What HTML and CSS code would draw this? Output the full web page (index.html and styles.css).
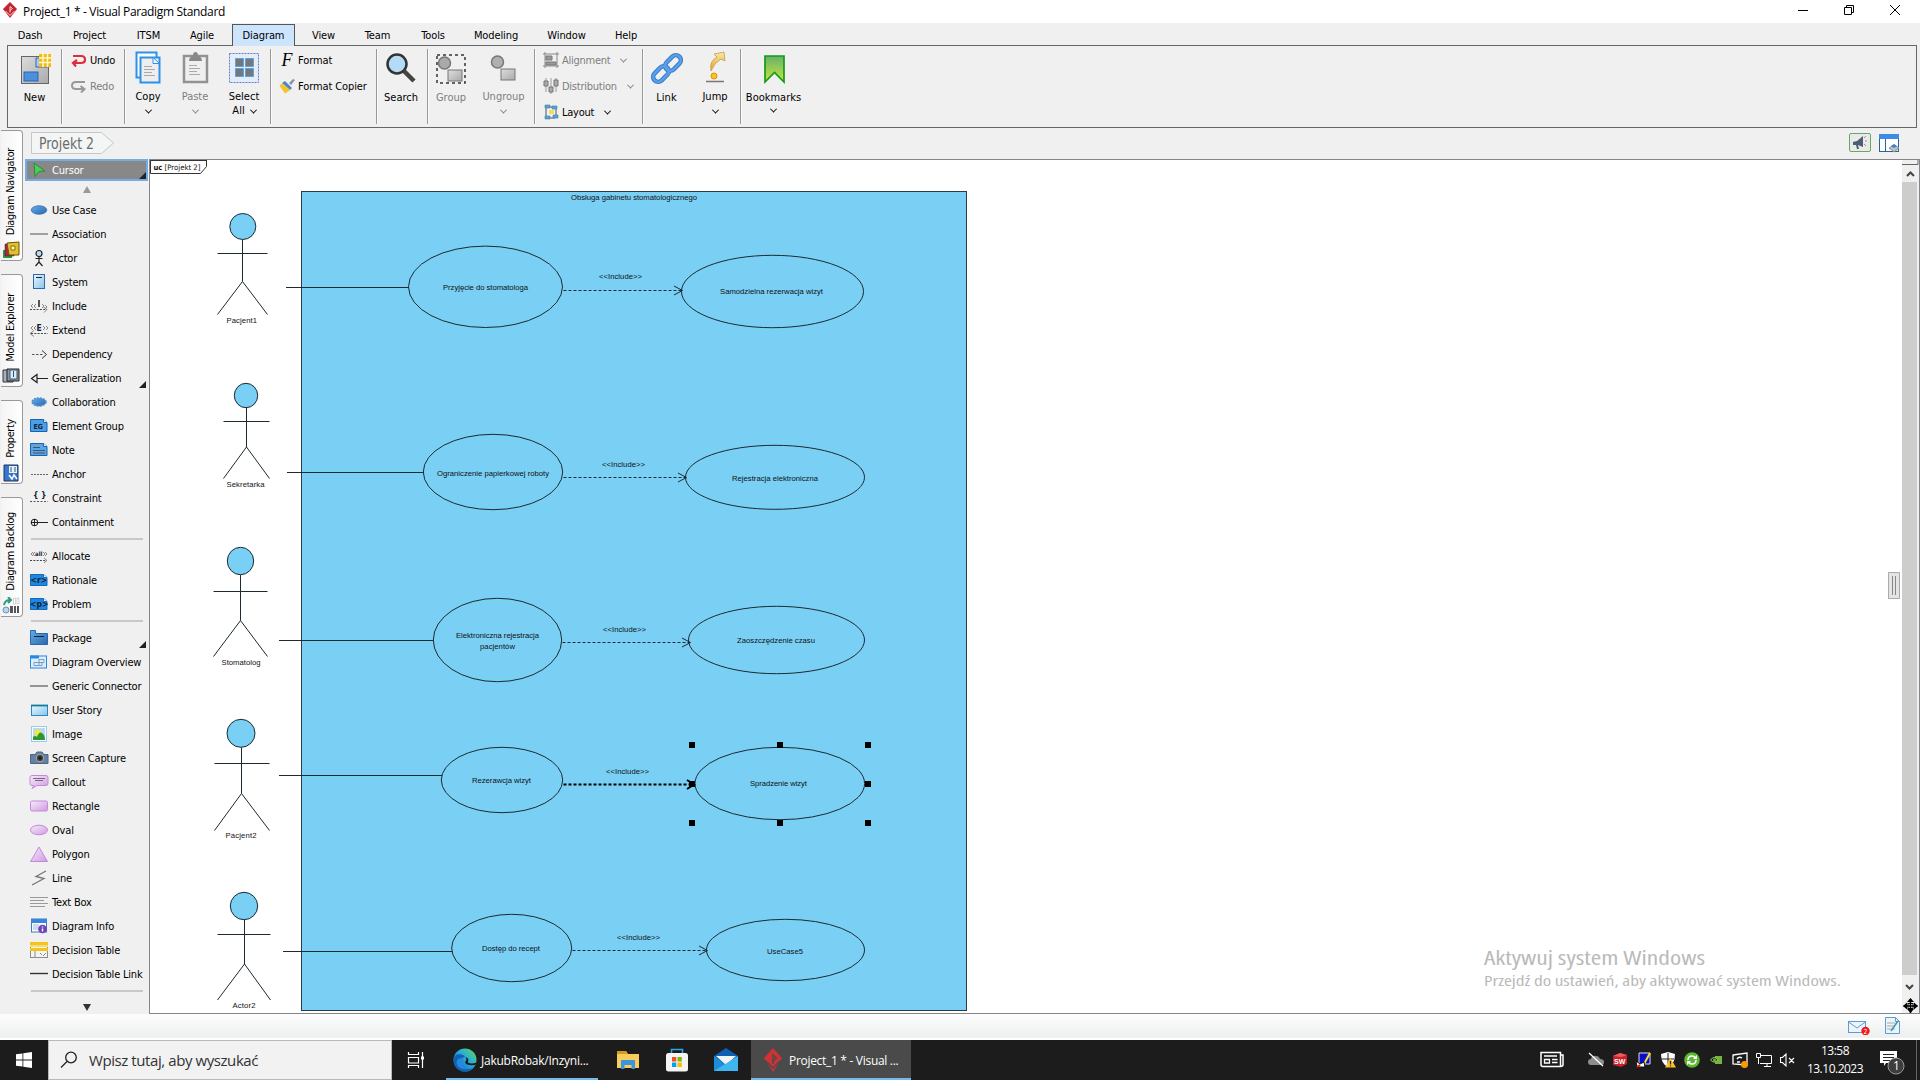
FILE: index.html
```html
<!DOCTYPE html>
<html lang="pl">
<head>
<meta charset="utf-8">
<title>Project_1 * - Visual Paradigm Standard</title>
<link rel="stylesheet" href="styles.css">
</head>
<body>
<svg width="0" height="0" class="defs">
  <defs>
    <linearGradient id="blue" x1="0" y1="0" x2="1" y2="1"><stop offset="0" stop-color="#67ade9"/><stop offset="1" stop-color="#2767ad"/></linearGradient>
    <linearGradient id="sky" x1="0" y1="0" x2="1" y2="1"><stop offset="0" stop-color="#e8f7ff"/><stop offset="1" stop-color="#88c4ec"/></linearGradient>
    <linearGradient id="violet" x1="0" y1="0" x2="1" y2="1"><stop offset="0" stop-color="#f6ecfb"/><stop offset="1" stop-color="#cf9ae0"/></linearGradient>
    <linearGradient id="grey" x1="0" y1="0" x2="1" y2="1"><stop offset="0" stop-color="#ddd"/><stop offset="1" stop-color="#aaa"/></linearGradient>
    <linearGradient id="green" x1="0" y1="0" x2="0" y2="1"><stop offset="0" stop-color="#68b06c"/><stop offset="1" stop-color="#c6e83c"/></linearGradient>
    <linearGradient id="gold" x1="0" y1="0" x2="0" y2="1"><stop offset="0" stop-color="#f8e9a8"/><stop offset="1" stop-color="#f0a016"/></linearGradient>
    <linearGradient id="edge" x1="0" y1="1" x2="1" y2="0"><stop offset="0" stop-color="#0d63b8"/><stop offset=".55" stop-color="#27a8de"/><stop offset="1" stop-color="#5ee05a"/></linearGradient>
  </defs>
</svg>

<header class="titlebar">
  <svg class="logo" width="14" height="16" viewBox="0 0 14 16"><path d="M7 0l7 7-7 9-7-9z" fill="#c4242b"/><path d="M2.500 9L7 13.500 11.500 9M7 10.500V4.500l2.500 2L7 8.500" stroke="#f6dada" fill="none"/></svg>
  <span class="title">Project_1 * - Visual Paradigm Standard</span>
  <div class="win-buttons">
    <svg width="12" height="12" viewBox="0 0 12 12"><path d="M1 6.500h10" stroke="#000"/></svg>
    <svg width="12" height="12" viewBox="0 0 12 12"><path d="M1.500 3.500h7v7h-7zM3.500 3.500v-2h7v7h-2" stroke="#000" fill="none"/></svg>
    <svg width="12" height="12" viewBox="0 0 12 12"><path d="M1 1l10 10M11 1L1 11" stroke="#000" fill="none"/></svg>
  </div>
</header>

<nav class="menu">
  <span>Dash</span><span>Project</span><span>ITSM</span><span>Agile</span><span class="active">Diagram</span><span>View</span><span>Team</span><span>Tools</span><span>Modeling</span><span>Window</span><span>Help</span>
</nav>

<section class="ribbon">
  <div class="group g-new">
    <div class="big low"><svg width="32" height="34" viewBox="0 0 32 34"><rect x="2.500" y="5.500" width="27" height="27" fill="url(#grey)" stroke="#666"/><rect x="5" y="21" width="14" height="9" fill="#4a90dc" stroke="#2567b5"/><path d="M17 7v9h12V7z" fill="#a9cbed" stroke="#2567b5"/><path d="M20 3h12v13H20z" fill="#f5b912"/><path d="M20 7h12M20 11.500h12M24 3v13M28.500 3v13" stroke="#fff8c8" stroke-width="1.500"/></svg><b>New</b></div>
  </div>
  <div class="group g-undo stack">
    <div class="small"><svg width="18" height="16" viewBox="0 0 18 16"><path d="M3 4h8q4 0 4 3.500T11 11H4M7 8l-4 3 3 3.500" fill="none" stroke="#e12a3c" stroke-width="2.200"/></svg>Undo</div>
    <div class="small off"><svg width="18" height="16" viewBox="0 0 18 16"><path d="M15 4H6Q2 4 2 7.500T6 11h8M10.500 8l4 3-3.500 3.500" fill="none" stroke="#999" stroke-width="2"/></svg>Redo</div>
  </div>
  <div class="group g-clip">
    <div class="big"><svg width="28" height="34" viewBox="0 0 28 34"><rect x="2.500" y="1.500" width="20" height="25" fill="#fff" stroke="#2c91e8" stroke-width="2"/><path d="M6.500 6.500h19v25h-19z" fill="#eee" stroke="#2c91e8" stroke-width="2"/><path d="M19 6.500l6.500 6h-6.500z" fill="#fff" stroke="#2c91e8"/><path d="M10 15.500h8M10 18.500h11M10 21.500h8M10 24.500h11" stroke="#aaa"/></svg><b>Copy</b><i class="chev"></i></div>
    <div class="big off"><svg width="28" height="34" viewBox="0 0 28 34"><rect x="3" y="5" width="23" height="26" fill="#efefef" stroke="#929292" stroke-width="2.500"/><path d="M8 10q0-4 4-5 0-4 2.500-4T17 5q4 1 4 5z" fill="#888"/><path d="M8 14.500h8M8 17.500h11M8 20.500h8M8 23.500h11" stroke="#aaa"/></svg><b>Paste</b><i class="chev"></i></div>
    <div class="big"><svg width="32" height="34" viewBox="0 0 32 34"><rect x="1.500" y="2.500" width="29" height="29" fill="#e4edf7" stroke="#5f7ed1" stroke-dasharray="2 1"/><path d="M7.500 7.500h8v8h-8zM17.500 7.500h8v8h-8zM7.500 17.500h8v8h-8zM17.500 17.500h8v8h-8z" fill="#777" stroke="#55a5e5"/></svg><b>Select</b><b class="line2">All <i class="chev"></i></b></div>
  </div>
  <div class="group g-format stack">
    <div class="small"><em class="fmt">F</em>Format</div>
    <div class="small"><svg width="16" height="16" viewBox="0 0 16 16"><path d="M10 5l4-4 2 1-4 5z" fill="#8395a8"/><path d="M6 3l7 7-2 2-8-7z" fill="#4a86c8"/><path d="M3 5l8 7-1 1-4 2.500L.500 8z" fill="#f5c431"/></svg>Format Copier</div>
  </div>
  <div class="group g-search"><div class="big low"><svg width="32" height="34" viewBox="0 0 32 34"><circle cx="12" cy="13" r="9.500" fill="#b4dcf8" stroke="#333" stroke-width="2.500"/><path d="M19 20l10 10" stroke="#444" stroke-width="4.500"/></svg><b>Search</b></div></div>
  <div class="group g-group">
    <div class="big low off"><svg width="32" height="34" viewBox="0 0 32 34"><rect x="2" y="4" width="28" height="28" fill="none" stroke="#333" stroke-width="1.500" stroke-dasharray="3 3"/><circle cx="9.500" cy="12" r="6" fill="#aaa" stroke="#777" stroke-width="1.500"/><rect x="13" y="19" width="14" height="11" fill="url(#grey)" stroke="#777"/></svg><b>Group</b></div>
    <div class="big off"><svg width="32" height="34" viewBox="0 0 32 34"><circle cx="9.500" cy="11" r="6" fill="#b0b0b0" stroke="#777" stroke-width="1.500"/><rect x="13" y="18" width="14" height="11" fill="url(#grey)" stroke="#777"/></svg><b>Ungroup</b><i class="chev"></i></div>
  </div>
  <div class="group g-align stack">
    <div class="small off"><svg width="16" height="16" viewBox="0 0 16 16"><path d="M2 0v16M14 0v16M0 2h16M0 14h16" stroke="#888"/><path d="M3 4h6v4H3zM3 10h10v3H3z" fill="#999" stroke="#777"/></svg>Alignment<i class="chev"></i></div>
    <div class="small off"><svg width="16" height="16" viewBox="0 0 16 16"><path d="M3 0v14M8 0v16M13 0v14" stroke="#999"/><path d="M1 3h4v5H1zM6 9h4v5H6zM11 2h4v6h-4z" fill="#aaa" stroke="#777"/></svg>Distribution<i class="chev"></i></div>
    <div class="small"><svg width="16" height="16" viewBox="0 0 16 16"><path d="M3 4v9M13 5v7M5 3h6M5 14h7" stroke="#456"/><path d="M2 1h5v3H2zM9 2h5v3H9zM2 12h5v3H2zM10 11h5v3h-5z" fill="#5ba6c8" stroke="#3f7f9d" stroke-width=".6"/><path d="M6 6h5v4H6z" fill="#f0dc6a"/></svg>Layout<i class="chev"></i></div>
  </div>
  <div class="group g-link">
    <div class="big low"><svg width="32" height="34" viewBox="0 0 32 34"><g fill="none" stroke="#2f7fd2" stroke-width="4.500"><rect x="13" y="7" width="18" height="10" rx="5" transform="rotate(-45 22 12)"/><rect x="1" y="18" width="18" height="10" rx="5" transform="rotate(-45 10 23)"/></g><g fill="none" stroke="#5f9fe2" stroke-width="2.500"><rect x="13" y="7" width="18" height="10" rx="5" transform="rotate(-45 22 12)"/><rect x="1" y="18" width="18" height="10" rx="5" transform="rotate(-45 10 23)"/></g></svg><b>Link</b></div>
    <div class="big"><svg width="24" height="34" viewBox="0 0 24 34"><path d="M8 20Q6 10 14 6L11 3l10-2 1 9-4-2q-6 3-10 12z" fill="url(#gold)" stroke="#b9934a" stroke-width=".7"/><circle cx="11" cy="25" r="3" fill="#f8c70e" stroke="#dd8d18"/><path d="M3 30.500h18" stroke="#777" stroke-width="1.500"/></svg><b>Jump</b><i class="chev"></i></div>
  </div>
  <div class="group g-book"><div class="big low"><svg width="24" height="34" viewBox="0 0 24 34"><path d="M3 5h19v26l-9.500-9.500L3 31z" fill="url(#green)" stroke="#129b18" stroke-width="1.700"/></svg><b>Bookmarks</b><i class="chev up"></i></div></div>
</section>

<div class="work">
  <aside class="side">
    <div class="tab t1"><span>Diagram Navigator</span><svg width="18" height="18" viewBox="0 0 18 18"><path d="M1 9h9v8H1z" fill="#2d9a3f"/><path d="M3 3h9v12H3z" fill="#b52348" stroke="#222" stroke-width=".5"/><path d="M5 2l12-1v13H7z" fill="#e3c02c" stroke="#655409"/><path d="M9 5h4v4H9z" fill="#fff4a8" stroke="#876f0b"/></svg></div>
    <div class="tab t2"><span>Model Explorer</span><svg width="18" height="18" viewBox="0 0 18 18"><path d="M1 3h10v12H1z" fill="#9fb2c7" stroke="#333"/><path d="M5 2h12v12H5z" fill="#8b96a0" stroke="#222"/><path d="M8 3h7v9H8z" fill="#d8edff" stroke="#456"/><path d="M11.500 4v6" stroke="#257"/></svg></div>
    <div class="tab t3"><span>Property</span><svg width="16" height="18" viewBox="0 0 16 18"><path d="M1 1h14v16H1z" fill="#3579cf" stroke="#235"/><path d="M6 2h8v7H6z" fill="#e3f1ff"/><path d="M6 11l3 4 2-4 3 4" stroke="#fff" stroke-width="1.500" fill="none"/><path d="M8 3v5M12 3v5" stroke="#456"/></svg></div>
    <div class="tab t4"><span>Diagram Backlog</span><svg width="18" height="18" viewBox="0 0 18 18"><path d="M2 8q1-5 6-5M6 0l3 3-3 3" fill="none" stroke="#299c7b" stroke-width="2"/><circle cx="4" cy="13" r="3" fill="#b8d5ef" stroke="#6793bb"/><path d="M8 9h3v7H8zM12 9h2v7h-2zM15 9h2v7h-2z" fill="#555"/><path d="M11.500 1h2v6h-2zM15 1h2v6h-2z" fill="#fff" stroke="#bbb" stroke-width=".6"/></svg></div>
  </aside>

  <div class="editor">
    <div class="crumbs">
      <svg class="crumb" width="84" height="23" viewBox="0 0 84 23"><path d="M.5.500h70l12 10.500-12 10.500H.5z" fill="#f4f6f6" stroke="#c5c8c8"/><text x="8" y="17" textLength="55" lengthAdjust="spacingAndGlyphs">Projekt 2</text></svg>
      <div class="crumb-tools">
        <svg width="22" height="20" viewBox="0 0 22 20"><rect x=".5" y=".5" width="21" height="18" rx="1.500" fill="#e9ebe9" stroke="#6aa569"/><path d="M4 9l4-1 6-5v11l-5-2 1 4H8l-1-4H4z" fill="#4c5d74"/><path d="M15 5l2-2M16 8h2M15 11l2 2" stroke="#999"/></svg>
        <svg width="21" height="20" viewBox="0 0 21 20"><rect x=".5" y="1.500" width="19" height="17" fill="#fff" stroke="#2a6496"/><path d="M0 1h20v5H0z" fill="#3c8be4"/><path d="M6.500 6v12" stroke="#2a6496"/><path d="M10 15l5-3 5 3-5 4z" fill="#b9c0c8" stroke="#8a8f96"/><path d="M12 13l3-2 3 2-3 2z" fill="#3c7fcc"/></svg>
      </div>
    </div>
    <div class="panes">
      <div class="palette">
        <div class="row cursor"><svg viewBox="0 0 20 18"><path d="M5 2l11 8-6 .5-4 5z" fill="#4ccc58" stroke="#2b8a35"/></svg>Cursor<i class="corner"></i></div>
        <div class="scroll-up"></div>
        <div class="row"><svg viewBox="0 0 20 18"><ellipse cx="10" cy="9" rx="7.800" ry="4.300" fill="url(#blue)" stroke="#2c6aa8" stroke-width=".7"/></svg>Use Case</div>
        <div class="row"><svg viewBox="0 0 20 18"><path d="M1 9h18" stroke="#858585" stroke-width="1.500"/></svg>Association</div>
        <div class="row"><svg viewBox="0 0 20 18"><circle cx="10" cy="4.500" r="3" fill="#b9dff6" stroke="#222" stroke-width="1.200"/><path d="M10 7.500V13M6.500 9.500h7M10 13l-3.500 4M10 13l3.500 4" stroke="#222" stroke-width="1.200" fill="none"/></svg>Actor</div>
        <div class="row"><svg viewBox="0 0 20 18"><rect x="4.500" y="1.500" width="11" height="14" fill="url(#sky)" stroke="#2c6aa8"/><path d="M7 4.500h6" stroke="#222"/></svg>System</div>
        <div class="row"><svg viewBox="0 0 20 18"><path d="M1 12.500h17" stroke="#444" stroke-dasharray="2 1.300"/><path d="M4 7L2 9l2 2M7 7L5 9l2 2M13 7l2 2-2 2M16 8l2 2-2 2M14 9.500l4 3-3 3" fill="none" stroke="#888"/><path d="M10 3v7" stroke="#222" stroke-width="1.500"/></svg>Include</div>
        <div class="row"><svg viewBox="0 0 20 18"><path d="M2 12.500h17" stroke="#444" stroke-dasharray="2 1.300"/><path d="M4 5L2 7l2 2M7 5L5 7l2 2M14 5l2 2-2 2M17 5l2 2-2 2M5 9.500l-4 3 4 3" fill="none" stroke="#888"/><text x="7.500" y="9.500" class="g8">E</text></svg>Extend</div>
        <div class="row"><svg viewBox="0 0 20 18"><path d="M3 9.500h12" stroke="#555" stroke-dasharray="2.500 1.500"/><path d="M13 5.500l4.500 4-4.500 4" fill="none" stroke="#333"/></svg>Dependency</div>
        <div class="row"><svg viewBox="0 0 20 18"><path d="M8 9.500h11M8 5.500v8L2.500 9.500z" fill="none" stroke="#222" stroke-width="1.200"/></svg>Generalization<i class="corner"></i></div>
        <div class="row"><svg viewBox="0 0 20 18"><ellipse cx="10" cy="9" rx="7" ry="4" fill="url(#blue)" stroke="#4a90d0" stroke-width="1.500" stroke-dasharray="2 1"/></svg>Collaboration</div>
        <div class="row"><svg viewBox="0 0 20 18"><path d="M1.500 2.500h13l3.500 3v9H1.500z" fill="#4a9fe8" stroke="#1763ac"/><path d="M14.500 2.500v3H18" fill="#fff" stroke="#1763ac"/><text x="4.500" y="11.500" class="g7">EG</text></svg>Element Group</div>
        <div class="row"><svg viewBox="0 0 20 18"><path d="M1.500 2.500h13l3.500 3v9H1.500z" fill="#5ba5e6" stroke="#1763ac"/><path d="M14.500 2.500v3H18" fill="#fff" stroke="#1763ac"/><path d="M4 6.500h7M4 9.500h12M4 12h12" stroke="#456"/></svg>Note</div>
        <div class="row"><svg viewBox="0 0 20 18"><path d="M2 9.500h17" stroke="#666" stroke-dasharray="2 1"/></svg>Anchor</div>
        <div class="row"><svg viewBox="0 0 20 18"><path d="M1 12.500h18" stroke="#555" stroke-dasharray="2 1.500"/><text x="4" y="9" class="g8">{ }</text></svg>Constraint</div>
        <div class="row"><svg viewBox="0 0 20 18"><circle cx="5.500" cy="9.500" r="3.300" fill="none" stroke="#222"/><path d="M2 9.500h17M5.500 6v7" stroke="#222"/></svg>Containment</div>
        <div class="sep"></div>
        <div class="row"><svg viewBox="0 0 20 18"><path d="M1 13.500h17" stroke="#444" stroke-dasharray="2 1.300"/><path d="M4 5L2 7l2 2M6 5L4 7l2 2M14 5l2 2-2 2M16 5l2 2-2 2M15 11l3 2.500-3 2.500" fill="none" stroke="#888"/><text x="6" y="9" class="g6">all</text></svg>Allocate</div>
        <div class="row"><svg viewBox="0 0 20 18"><path d="M1.500 3.500h13l3.500 3v8H1.500z" fill="#1d87e2" stroke="#1469b8"/><path d="M14.500 3.500v3H18" fill="#fff" stroke="#1469b8"/><text x="1.500" y="12" class="g8">&lt;r&gt;</text></svg>Rationale</div>
        <div class="row"><svg viewBox="0 0 20 18"><path d="M1.500 3.500h13l3.500 3v8H1.500z" fill="#1d87e2" stroke="#1469b8"/><path d="M14.500 3.500v3H18" fill="#fff" stroke="#1469b8"/><text x="1" y="12" class="g8">&lt;p&gt;</text></svg>Problem</div>
        <div class="sep"></div>
        <div class="row"><svg viewBox="0 0 20 18"><path d="M1.500 4.500v-3h5v3h12v11h-17z" fill="url(#blue)" stroke="#2767ad"/><path d="M5 7.500h10" stroke="#123"/></svg>Package<i class="corner"></i></div>
        <div class="row"><svg viewBox="0 0 20 18"><rect x="1.500" y="3" width="16" height="12" fill="#dceefc" stroke="#2688e2"/><path d="M1 2.500h9v3H1z" fill="#2688e2"/><path d="M10 6.500h5v3h-5zM5 9.500h5v3H5zM10 12.500h3v-3" fill="none" stroke="#7a9cc0"/></svg>Diagram Overview</div>
        <div class="row"><svg viewBox="0 0 20 18"><path d="M1 9h18" stroke="#858585" stroke-width="1.700"/></svg>Generic Connector</div>
        <div class="row"><svg viewBox="0 0 20 18"><rect x="2.500" y="4.500" width="16" height="10" fill="url(#sky)" stroke="#268ac2"/><path d="M2 4.500h17" stroke="#117d93" stroke-width="1.800"/></svg>User Story</div>
        <div class="row"><svg viewBox="0 0 20 18"><rect x="2.500" y="1.500" width="15" height="15" fill="#fff" stroke="#9dc8e8"/><path d="M4 3h12v12H4z" fill="#bdd8f2"/><circle cx="9" cy="8" r="3" fill="#f7ee18"/><path d="M4 15v-3q2-2 4 0 2-6 5-4t3 7z" fill="#2f9634"/></svg>Image</div>
        <div class="row"><svg viewBox="0 0 20 18"><path d="M1.500 5.500H6L8 3h5l2 2.500h4v9H1.500z" fill="#6481a5" stroke="#4c6686"/><circle cx="11" cy="9" r="3.800" fill="#444" stroke="#aaa"/><circle cx="11" cy="9" r="1.500" fill="#181818"/></svg>Screen Capture</div>
        <div class="row"><svg viewBox="0 0 20 18"><path d="M3 2.500h14q2 0 2 2v6q0 2-2 2H8l-5 3 2-3H3q-2 0-2-2v-6q0-2 2-2z" fill="url(#violet)" stroke="#c788db"/><path d="M4 5.500h12M6 7.500h8" stroke="#776a80"/></svg>Callout</div>
        <div class="row"><svg viewBox="0 0 20 18"><rect x="1.500" y="4" width="17" height="10" rx="1.500" fill="url(#violet)" stroke="#c788db"/></svg>Rectangle</div>
        <div class="row"><svg viewBox="0 0 20 18"><ellipse cx="10" cy="9" rx="8.500" ry="4.800" fill="url(#violet)" stroke="#c788db"/></svg>Oval</div>
        <div class="row"><svg viewBox="0 0 20 18"><path d="M10 2l8.500 14.500h-17z" fill="url(#violet)" stroke="#c788db"/></svg>Polygon</div>
        <div class="row"><svg viewBox="0 0 20 18"><path d="M17 2L7 7.500l8 2L3 16" stroke="#777" stroke-width="1.300" fill="none"/></svg>Line</div>
        <div class="row"><svg viewBox="0 0 20 18"><path d="M1 4.500h18M1 7.500h14M1 10.500h18M1 13.500h15" stroke="#999"/></svg>Text Box</div>
        <div class="row"><svg viewBox="0 0 20 18"><rect x="2.500" y="2" width="15" height="13" fill="#f8fbff" stroke="#4379b5"/><path d="M2 2h16v4H2z" fill="#3585e2"/><path d="M4 8h6M4 10h6M4 12h6" stroke="#9dbbe0"/><circle cx="13.500" cy="12" r="4.300" fill="#7040b8"/><path d="M13.500 9.500v1M13.500 11.500v3" stroke="#fff" stroke-width="1.500"/></svg>Diagram Info</div>
        <div class="row"><svg viewBox="0 0 20 18"><rect x="1.500" y="1.500" width="17" height="15" fill="#f2f4f4" stroke="#8a8f8f"/><path d="M1 1h18v3H1zM1 7h18v3H1z" fill="#f5c416"/><path d="M1 5h18" stroke="#f5dc7a" stroke-width="2"/><path d="M6 10v6M11 12l2 2M14 15l3-3" stroke="#888"/></svg>Decision Table</div>
        <div class="row"><svg viewBox="0 0 20 18"><path d="M1 8.500h18" stroke="#333" stroke-width="1.400"/></svg>Decision Table Link</div>
        <div class="sep"></div>
        <div class="scroll-down"></div>
      </div>

      <div class="canvas">
        <svg class="diagram" viewBox="150 160 1752 853" width="1752" height="853">
          <g class="frame"><path d="M150.500 160v13.500h50l6-7V160" fill="#fff"/><path d="M150 160.500h57"/></g>
          <text class="frame-t" x="153.500" y="170" font-weight="bold">uc</text><text class="frame-t" x="164.500" y="170" textLength="36" lengthAdjust="spacingAndGlyphs">[Projekt 2]</text>
          <rect class="system" x="301.500" y="191.500" width="665" height="819"/>
          <g class="shape">
            <ellipse class="head" cx="242.800" cy="226.500" rx="13" ry="13"/><path d="M242.500 240v41.500M217.500 253.500h50M217.500 314.500l25-33 25 33"/>
            <ellipse class="head" cx="246" cy="395.500" rx="11.700" ry="12.200"/><path d="M246.500 408v39M223.500 421.500h46M223.500 478.500l23-31.500 23 31.500"/>
            <ellipse class="head" cx="240.500" cy="561" rx="13.200" ry="13.700"/><path d="M240.500 575v45.500M213.500 591.500h54M213.500 656.500l27-36 27 36"/>
            <ellipse class="head" cx="241" cy="733.300" rx="14" ry="14"/><path d="M241.500 747.500v46M214.500 763.500h55M214.500 830.500l27-37 28 37"/>
            <ellipse class="head" cx="244" cy="906" rx="13.700" ry="13.700"/><path d="M244.500 920v44M217.500 934.500h53M217.500 1000l27-36 26 36"/>
            <path d="M286 287.500h123M287 472.500h137M279 640.500h154M279 775.500h163M283 951.500h169"/>
            <ellipse cx="485.500" cy="286.800" rx="77" ry="40.700"/><ellipse cx="772.500" cy="291.500" rx="91" ry="36.200"/>
            <ellipse cx="493" cy="472" rx="69.700" ry="37.700"/><ellipse cx="775" cy="477.300" rx="89.500" ry="32"/>
            <ellipse cx="497.500" cy="640" rx="64.200" ry="41.700"/><ellipse cx="776.500" cy="640" rx="88" ry="33.700"/>
            <ellipse cx="502" cy="780" rx="60.700" ry="32.700"/><ellipse cx="779.800" cy="783.500" rx="84.800" ry="36.200"/>
            <ellipse cx="511.700" cy="948" rx="60" ry="33.700"/><ellipse cx="785.500" cy="950" rx="79" ry="30.700"/>
            <path class="dash" d="M563.500 290.500H682M563.500 477.500H686M562.500 642.500H690M572.500 950.500H707"/>
            <path d="M674 286l8.500 4.500-8.500 4.500M678 473l8.500 4.500-8.500 4.500M682 638l8.500 4.500-8.500 4.500M699 946l8.500 4.500-8.500 4.500"/>
            <path class="thick" d="M563.500 784.500H690"/><path class="thick-a" d="M687 780l7 4.500-7 4.500"/>
          </g>
          <path d="M689 742h6v6h-6zM777 742h6v6h-6zM865 742h6v6h-6zM689 781h6v6h-6zM865 781h6v6h-6zM689 820h6v6h-6zM777 820h6v6h-6zM865 820h6v6h-6z"/>
          <g class="labels" transform="translate(0 -1)">
            <text x="571" y="200.500" textLength="126">Obsługa gabinetu stomatologicznego</text>
            <text x="226.500" y="323.500" textLength="30.500">Pacjent1</text>
            <text x="226.500" y="487.500" textLength="38">Sekretarka</text>
            <text x="221.500" y="665.500" textLength="39">Stomatolog</text>
            <text x="225.500" y="838.500" textLength="31">Pacjent2</text>
            <text x="232.500" y="1008.500" textLength="23">Actor2</text>
            <text x="443" y="290.500" textLength="85">Przyjęcie do stomatologa</text>
            <text x="720" y="294.500" textLength="103">Samodzielna rezerwacja wizyt</text>
            <text x="437" y="476.500" textLength="112">Ograniczenie papierkowej roboty</text>
            <text x="732" y="481.500" textLength="86">Rejestracja elektroniczna</text>
            <text x="456" y="638.500" textLength="83">Elektroniczna rejestracja</text>
            <text x="480" y="649.500" textLength="35">pacjentów</text>
            <text x="737" y="643.500" textLength="78">Zaoszczędzenie czasu</text>
            <text x="472" y="783.500" textLength="59">Rezerawcja wizyt</text>
            <text x="750" y="786.500" textLength="57">Spradzenie wizyt</text>
            <text x="482" y="951.500" textLength="58">Dostęp do recept</text>
            <text x="767" y="954.500" textLength="36">UseCase5</text>
            <text x="599" y="279.500" textLength="43">&lt;&lt;Include&gt;&gt;</text>
            <text x="602" y="467.500" textLength="43">&lt;&lt;Include&gt;&gt;</text>
            <text x="603" y="632.500" textLength="43">&lt;&lt;Include&gt;&gt;</text>
            <text x="606" y="774.500" textLength="43">&lt;&lt;Include&gt;&gt;</text>
            <text x="617" y="940.500" textLength="43">&lt;&lt;Include&gt;&gt;</text>
          </g>
          <g class="watermark"><text x="1484" y="965" class="wm1" textLength="221" lengthAdjust="spacingAndGlyphs">Aktywuj system Windows</text><text x="1484" y="986" class="wm2" textLength="357" lengthAdjust="spacingAndGlyphs">Przejdź do ustawień, aby aktywować system Windows.</text></g>
          <path d="M1888.500 572.500h11v26h-11z" fill="#e4e4e4" stroke="#aaa"/><path d="M1892.500 576v19M1895.500 576v19" stroke="#888"/>
        </svg>
        <div class="scrollbar">
          <svg width="18" height="22" viewBox="0 0 18 22"><path d="M0 4.500h16V0" stroke="#666" fill="none"/><path d="M5 16l3.500-3.500L12 16" stroke="#444" stroke-width="2" fill="none"/></svg>
          <div class="thumb"></div>
          <svg width="18" height="38" viewBox="0 0 18 38"><path d="M4 10l3.500 3.500L11 10" stroke="#444" stroke-width="2" fill="none"/><path d="M8.500 24v14M1.500 31h14" stroke="#000" stroke-width="1.500"/><path d="M8.500 23l3.500 4H5zM8.500 38l3.500-4H5zM1 31l4-3.500v7zM16 31l-4-3.500v7z"/><rect x="6" y="28.500" width="5" height="5" fill="none" stroke="#000"/></svg>
        </div>
      </div>
    </div>
  </div>
</div>

<div class="status">
  <svg width="24" height="18" viewBox="0 0 24 18"><rect x="1.500" y="4.500" width="17" height="11" fill="#eef5fa" stroke="#5a9bd8"/><path d="M1.500 5l8.500 6 8.500-6" fill="none" stroke="#5a9bd8"/><circle cx="18.500" cy="14" r="4.200" fill="#f01818"/><text x="16.500" y="16.500" class="n2">2</text></svg>
  <svg width="16" height="18" viewBox="0 0 16 18"><path d="M.5.500h10l4 4v12H.5z" fill="#eef3f7" stroke="#5a9bd8"/><path d="M10.500.500v4h4" fill="none" stroke="#5a9bd8"/><path d="M2 6h8M2 9h8M2 12h8" stroke="#aaa"/><path d="M13 4L6 14" stroke="#3a99b5" stroke-width="1.500"/></svg>
</div>

<footer class="taskbar">
  <div class="start"><svg width="16" height="16" viewBox="0 0 16 16"><path d="M0 2.300L6.500 1.400V7.500H0zM7.300 1.300L16 0v7.500H7.300zM0 8.400h6.500v6.200L0 13.700zM7.300 8.400H16V16l-8.700-1.300z" fill="#fff"/></svg></div>
  <div class="search"><svg width="18" height="18" viewBox="0 0 18 18"><circle cx="11" cy="6.500" r="5.300" fill="none" stroke="#222" stroke-width="1.300"/><path d="M7 10.500L1 16.500" stroke="#222" stroke-width="1.300"/></svg><span>Wpisz tutaj, aby wyszukać</span></div>
  <div class="task tv"><svg width="18" height="16" viewBox="0 0 18 16"><path d="M1.500 0v2.500h10V0M1.500 16v-2.500h10V16M1.500 5.500h10v5.500h-10zM15.500 0v16" fill="none" stroke="#fff" stroke-width="1.200"/><path d="M14 4.500h3v3h-3z" fill="#fff"/></svg></div>
  <div class="task edge"><svg width="24" height="24" viewBox="0 0 24 24"><circle cx="12" cy="12" r="11.500" fill="url(#edge)"/><path d="M.6 11C2 5 9 5.500 12 8.500q-4 1-3.500 6 .5 5 6 6.500 3 .5 6-1.500Q16 25.500 8 23 0 20 .6 11z" fill="#1260b0"/><path d="M12 9.500q-2.500 1-2.500 5 0 5 5 7-10 0-11-7 0-5 8.500-5z" fill="#2489dc"/><path d="M12.500 9q2 3-.5 5 1 4 10 3 1-1 1.500-2.500-4 1.500-8 .5-1.500-1 0-3-.5-2.500-3-3z" fill="#1c1c1c"/></svg><span>JakubRobak/Inzyni...</span></div>
  <div class="task ic"><svg width="22" height="20" viewBox="0 0 22 20"><path d="M0 1h9l2 3h11v14H0z" fill="#f9cd5c"/><path d="M0 1h9l1 3H0z" fill="#d99a1c"/><path d="M4 19v-8q0-1 1-1h12q1 0 1 1v8h-3.500v-4h-7v4z" fill="#3b94df"/></svg></div>
  <div class="task ic"><svg width="24" height="24" viewBox="0 0 24 24"><path d="M6.500 6V1.500h11V6" fill="none" stroke="#28a8ea" stroke-width="1.600"/><rect x="1" y="5" width="22" height="18.500" rx="2.500" fill="#f4f4f4"/><path d="M7 9h4.300v4.500H7z" fill="#f05022"/><path d="M12.500 9h4.300v4.500h-4.300z" fill="#7db800"/><path d="M7 14.500h4.300V19H7z" fill="#00a3ee"/><path d="M12.500 14.500h4.300V19h-4.300z" fill="#fdb900"/></svg></div>
  <div class="task ic"><svg width="24" height="24" viewBox="0 0 24 24"><path d="M0 8l12-8 12 8v15H0z" fill="#0f60b4"/><path d="M2 8h20l-10 9z" fill="#f2f4f6"/><path d="M0 8l14 10.500L24 23H0z" fill="#1c8cda"/><path d="M24 8L0 23h24z" fill="#3fb6ef"/></svg></div>
  <div class="task vp"><svg width="20" height="24" viewBox="0 0 20 24"><path d="M10 0l9 10-9 14L1 10z" fill="#cd3235"/><path d="M3 13l7 7 7-7M10 16V7l3.500 3-3.500 3" fill="none" stroke="#4a4a4a" stroke-width="1.400"/></svg><span>Project_1 * - Visual ...</span></div>
  <div class="tray">
    <svg class="news" width="24" height="18" viewBox="0 0 24 18"><path d="M1 1.500h19.500v14H3q-2 0-2-2zM20.500 4H23v9.500q0 2-2.500 2" fill="none" stroke="#fff" stroke-width="1.500"/><path d="M4 5h13M12 8.500h5.500M12 11.500h5.500" stroke="#fff" stroke-width="1.500"/><path d="M4.500 8.500h5v3.500h-5z" fill="none" stroke="#fff" stroke-width="1.300"/></svg>
    <svg width="18" height="16" viewBox="0 0 18 16"><path d="M4 13q-3 0-3-3t3-3q1-4 5-3 3 0 4 3 4 0 4 3t-3 3z" fill="#8e8e8e"/><path d="M2 1l14 13" stroke="#fff" stroke-width="1.300"/></svg>
    <svg width="16" height="16" viewBox="0 0 16 16"><path d="M1 4l7-3 7 2v9l-6 3-8-2z" fill="#c92128"/><path d="M1 4l8 1 6-2-7-2z" fill="#ef5a5c"/><text x="2" y="12" class="sw">SW</text></svg>
    <svg width="16" height="16" viewBox="0 0 16 16"><path d="M3 1h11v11H3z" fill="#0b0bd0" stroke="#ddd"/><path d="M14 1L8 12l-2 1" stroke="#f2e21a" stroke-width="2" fill="none"/><path d="M0 9l4 3 4-2 1 5H1z" fill="#fff" stroke="#111"/><path d="M1 15l3-2" stroke="#e11" stroke-width="2"/></svg>
    <svg width="16" height="16" viewBox="0 0 16 16"><path d="M8 0l7 2q0 10-7 13Q1 12 1 2z" fill="#fff"/><path d="M8 1v13M1 7h13" stroke="#222"/><path d="M10.500 6l5.500 9.500H5z" fill="#fbc02d"/><path d="M10.500 9v3.500M10.500 13.500v1" stroke="#222" stroke-width="1.200"/></svg>
    <svg width="16" height="16" viewBox="0 0 16 16"><circle cx="8" cy="8" r="7.800" fill="#5cb82e"/><path d="M4 8q0-4 4-4 2 0 3 1.500M12 8q0 4-4 4-2 0-3-1.500" fill="none" stroke="#fff" stroke-width="1.600"/><path d="M9 7h4V3zM7 9H3v4z" fill="#fff"/></svg>
    <svg width="16" height="16" viewBox="0 0 16 16"><path d="M7 4h7v8H7z" fill="#76b43c"/><path d="M2.500 8q3.500-5 7.500 0-4 4-7.500 0z" fill="#1c1c1c" stroke="#9bd066"/><circle cx="6.500" cy="8" r="1.500" fill="#76b43c"/></svg>
    <svg width="16" height="16" viewBox="0 0 16 16"><path d="M1 3l14-2v12l-14-1z" fill="none" stroke="#fff" stroke-width="1.300"/><path d="M5 7q2-3 5-1M5 10h3" fill="none" stroke="#fff" stroke-width="1.500"/><circle cx="12.500" cy="12.500" r="3.500" fill="#ff9800"/></svg>
    <svg width="16" height="16" viewBox="0 0 16 16"><path d="M4 3.500h11.500v8H4M8 14.500h7M11 11.500v3M.5 1.500h4v4h-4zM2.500 6v6" fill="none" stroke="#fff"/></svg>
    <svg width="16" height="16" viewBox="0 0 16 16"><path d="M.5 5.500h2L6 2v12l-3.500-3.500h-2zM9 6l5 5M14 6l-5 5" fill="none" stroke="#fff" stroke-width="1.100"/></svg>
    <div class="clock"><span>13:58</span><span>13.10.2023</span></div>
    <div class="note"><svg width="26" height="26" viewBox="0 0 26 26"><path d="M0 2h17v12H6l-2 3v-3H0z" fill="#fff"/><path d="M3 5.500h11M3 8.500h11M3 11.500h7" stroke="#222"/><circle cx="16" cy="17" r="8" fill="#3d3d3d" stroke="#999"/><text x="13" y="21" class="n1">1</text></svg></div>
    <div class="desk"></div>
  </div>
</footer>
</body>
</html>
```
FILE: styles.css
```css
* { box-sizing: border-box; }
body { margin: 0; width: 1920px; height: 1080px; overflow: hidden; display: flex; flex-direction: column; background: #f0f0f0; color: #000; font-family: "DejaVu Sans Condensed", "DejaVu Sans", sans-serif; font-stretch: condensed; font-size: 11px; }
svg { display: block; flex: none; }
.titlebar { height: 23px; flex: none; background: #fff; display: flex; align-items: center; padding: 0 19px 3px 3px; font: 12px "Open Sans", sans-serif; }
.logo { margin-right: 6px; }
.title { letter-spacing: -.34px; padding-top: 2px; }
.win-buttons { margin-left: auto; display: flex; gap: 34px; }

.menu { height: 22px; flex: none; display: flex; }
.menu span { display: flex; align-items: center; justify-content: center; padding-top: 2px; letter-spacing: -.1px; }
.menu span:nth-child(1) { width: 60px; }
.menu span:nth-child(2), .menu span:nth-child(3) { width: 59px; }
.menu span:nth-child(4) { width: 48px; margin-right: 6px; }
.menu .active { width: 63px; height: 22px; margin-top: 1px; position: relative; background: #cce4fc; border: 1px solid #555; border-bottom: 0; padding: 0 0 1px; }
.menu span:nth-child(6) { width: 57px; }
.menu span:nth-child(7) { width: 51px; }
.menu span:nth-child(8) { width: 60px; }
.menu span:nth-child(9) { width: 66px; }
.menu span:nth-child(10) { width: 75px; }
.menu span:nth-child(11) { width: 44px; }

.ribbon { height: 83px; flex: none; margin: 0 3px 0 7px; border: 1px solid #676767; display: flex; padding: 3px 0; }
.group { display: flex; border-right: 1px solid #999; box-shadow: 1px 0 #fafafa; }
.g-new { width: 54px; } .g-undo { width: 63px; } .g-clip { width: 146px; } .g-format { width: 106px; }
.g-search { width: 51px; } .g-group { width: 107px; } .g-align { width: 108px; } .g-link { width: 98px; } .g-book { width: 65px; border: 0; box-shadow: none; }
.big { flex: 1 0 0; display: flex; flex-direction: column; align-items: center; padding-top: 2px; }
.big b, .big .line2 { font-weight: normal; line-height: 14px; margin-top: 5px; white-space: nowrap; }
.big.low b { margin-top: 6px; }
.big .line2 { margin-top: 0; display: flex; align-items: center; gap: 6px; }
.big > .chev { margin-top: 5px; }
.big > .chev.up { margin-top: 3px; }
.g-clip .big:nth-child(1) { flex: 0 0 46px; } .g-clip .big:nth-child(2) { flex: 0 0 48px; } .g-clip .big:nth-child(3) { flex: 0 0 50px; }
.g-search .big { padding-right: 2px; }
.g-group .big:nth-child(1) { flex: 0 0 46px; } .g-group .big:nth-child(2) { flex: 0 0 59px; }
.g-link .big:nth-child(1) { flex: 0 0 47px; } .g-link .big:nth-child(2) { flex: 0 0 50px; }
.off { color: #7e7e7e; }
.chev { width: 5px; height: 5px; border: solid currentColor; border-width: 0 1.500px 1.500px 0; transform: rotate(45deg) translate(-1px, -1px); display: inline-block; }
.stack { flex-direction: column; padding-left: 8px; }
.small { height: 26px; flex: none; position: relative; top: -2px; display: flex; align-items: center; gap: 2px; white-space: nowrap; letter-spacing: -.1px; }
.g-undo .small { letter-spacing: -.2px; }
.g-format .small { gap: 3px; }
.g-align .small { gap: 3px; letter-spacing: -.25px; }
.small .chev { margin-left: 8px; }
.fmt { width: 16px; text-align: center; font: italic 18px "Liberation Serif", serif; }

.work { flex: 1; display: flex; min-height: 0; }
.side { width: 25px; padding-top: 2px; }
.tab { width: 22px; margin-left: 1px; border: 1px solid #999; border-left: 0; border-radius: 0 4px 4px 0; background: linear-gradient(90deg, #f4f4f4, #fff); display: flex; flex-direction: column; align-items: center; justify-content: flex-end; gap: 6px; padding: 0 2px 1px 0; margin-bottom: 13px; font-size: 10.800px; letter-spacing: -.3px; }
.tab span { writing-mode: vertical-rl; transform: rotate(180deg); white-space: nowrap; }
.t1 { height: 131px; } .t2 { height: 113px; } .t3 { height: 84px; } .t4 { height: 120px; }
.editor { flex: 1; display: flex; flex-direction: column; min-width: 0; }
.crumbs { height: 31px; flex: none; display: flex; justify-content: space-between; padding: 4px 20px 0 6px; }
.crumb text { font-size: 15px; fill: #6b6b6b; }
.crumb-tools { display: flex; gap: 8px; padding-top: 1px; }
.panes { flex: 1; display: flex; min-height: 0; }
.palette { width: 124px; overflow: hidden; }
.row { height: 24px; display: flex; align-items: center; gap: 3px; padding-left: 4px; position: relative; white-space: nowrap; font-size: 11px; letter-spacing: -.19px; }
.row svg { width: 20px; height: 18px; }
.cursor { height: 22px; background: #888; border: 2px solid #74ace6; color: #fff; padding-left: 2px; margin-right: 1px; }
.corner { position: absolute; right: 3px; bottom: 2px; border-left: 7px solid transparent; border-bottom: 7px solid #222; }
.cursor .corner { right: 0; bottom: 0; }
.scroll-up { height: 17px; display: flex; align-items: flex-end; justify-content: center; padding-bottom: 5px; }
.scroll-up::before { content: ""; border: 4px solid transparent; border-top: 0; border-bottom: 7px solid #999; margin-right: 1px; }
.sep { height: 2px; background: #c8c8c8; margin: 4px 6px 4px 6px; }
.scroll-down { display: flex; justify-content: center; padding-top: 8px; }
.scroll-down::before { content: ""; border: 4px solid transparent; border-bottom: 0; border-top: 7px solid #333; margin-right: 1px; }
.g6, .g7, .g8 { font-weight: bold; font-size: 7px; fill: #123; letter-spacing: 0; } .g6 { font-size: 6px; } .g8 { font-size: 8.500px; }
.canvas { flex: 1; display: flex; background: #fff; border: 1px solid #85858f; border-right: 0; min-width: 0; }
.diagram { flex: none; }
.frame { fill: none; stroke: #333; }
.frame-t { font-size: 7.500px; fill: #111; }
.system { fill: #7acff5; stroke: #2c3a42; }
.shape { fill: none; stroke: #1c2a32; stroke-width: 1; }
.head { fill: #7acff5; }
.dash { stroke-dasharray: 3 2; }
.thick { stroke: #000; stroke-width: 2; stroke-dasharray: 3 2; } .thick-a { stroke: #000; stroke-width: 2; }
.labels { font: 7.700px "Liberation Sans", sans-serif; fill: #111; }
.watermark { font-family: "Open Sans", sans-serif; fill: #bababa; }
.wm1 { font-size: 20px; } .wm2 { font-size: 15px; }
.scrollbar { width: 18px; display: flex; flex-direction: column; background: #f0f0f0; border-right: 1px solid #85858f; }
.thumb { flex: 1; background: #cdcdcd; margin-right: 2px; }

.status { height: 26px; flex: none; display: flex; justify-content: flex-end; gap: 14px; padding: 3px 19px 0; background: linear-gradient(#fdfdfd, #edf0ef 90%, #fff 92%); }
.n2 { font-size: 7px; fill: #fff; }
.taskbar { height: 40px; flex: none; background: #1c1c1c; color: #fff; display: flex; font: 12px "Open Sans", sans-serif; }
.start { width: 48px; display: flex; align-items: center; justify-content: center; }
.search { width: 344px; background: #f2f2f2; border: 1px solid #b8b8b8; display: flex; align-items: center; padding-left: 11px; gap: 11px; color: #333; font-size: 15px; letter-spacing: -.42px; }
.task { display: flex; align-items: center; justify-content: center; }
.tv { width: 48px; margin-right: 6px; }
.edge { width: 152px; border-bottom: 2px solid #76b9ed; padding-top: 2px; justify-content: flex-start; padding-left: 7px; gap: 4px; margin-right: 5px; letter-spacing: -.25px; }
.ic { width: 49px; }
.vp { width: 160px; margin-left: 1px; background: #4a4a4a; border-bottom: 2px solid #76b9ed; padding: 2px 0 0 12px; justify-content: flex-start; gap: 6px; letter-spacing: -.3px; }
.tray { margin-left: auto; display: flex; align-items: center; gap: 8px; }
.tray > svg:nth-child(2) { margin-right: -1px; }
.news { margin-right: 15px; }
.sw { font: bold 7px "Liberation Sans", sans-serif; fill: #fff; }
.clock { width: 62px; display: flex; flex-direction: column; align-items: center; line-height: 18px; letter-spacing: -.5px; }
.note { margin-left: 6px; padding-top: 4px; margin-right: 2px; }
.n1 { font-size: 12px; fill: #fff; }
.desk { width: 4px; height: 40px; border-left: 1px solid #666; }
```
